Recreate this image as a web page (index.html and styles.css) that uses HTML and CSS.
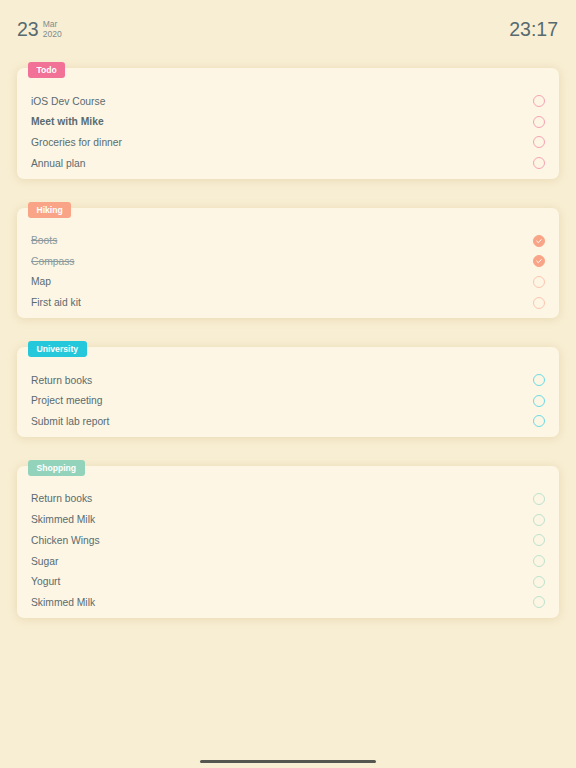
FILE: index.html
```html
<!DOCTYPE html>
<html>
<head>
<meta charset="utf-8">
<link rel="stylesheet" href="styles.css">
</head>
<body>
<div class="screen">
  <header class="topbar">
    <div class="date">
      <span class="day">23</span>
      <span class="monthyear"><span>Mar</span><span>2020</span></span>
    </div>
    <div class="time">23:17</div>
  </header>

  <main class="lists">
    <section class="card todo">
      <div class="badge">Todo</div>
      <ul class="items">
        <li class="item"><span>iOS Dev Course</span><i class="check"></i></li>
        <li class="item bold"><span>Meet with Mike</span><i class="check"></i></li>
        <li class="item"><span>Groceries for dinner</span><i class="check"></i></li>
        <li class="item"><span>Annual plan</span><i class="check"></i></li>
      </ul>
    </section>

    <section class="card hiking">
      <div class="badge">Hiking</div>
      <ul class="items">
        <li class="item done"><span>Boots</span><i class="check"><svg viewBox="0 0 12 12"><path d="M3.8 6.2 L5.3 7.6 L8.2 4.6"/></svg></i></li>
        <li class="item done"><span>Compass</span><i class="check"><svg viewBox="0 0 12 12"><path d="M3.8 6.2 L5.3 7.6 L8.2 4.6"/></svg></i></li>
        <li class="item"><span>Map</span><i class="check"></i></li>
        <li class="item"><span>First aid kit</span><i class="check"></i></li>
      </ul>
    </section>

    <section class="card university">
      <div class="badge">University</div>
      <ul class="items">
        <li class="item"><span>Return books</span><i class="check"></i></li>
        <li class="item"><span>Project meeting</span><i class="check"></i></li>
        <li class="item"><span>Submit lab report</span><i class="check"></i></li>
      </ul>
    </section>

    <section class="card shopping">
      <div class="badge">Shopping</div>
      <ul class="items">
        <li class="item"><span>Return books</span><i class="check"></i></li>
        <li class="item"><span>Skimmed Milk</span><i class="check"></i></li>
        <li class="item"><span>Chicken Wings</span><i class="check"></i></li>
        <li class="item"><span>Sugar</span><i class="check"></i></li>
        <li class="item"><span>Yogurt</span><i class="check"></i></li>
        <li class="item"><span>Skimmed Milk</span><i class="check"></i></li>
      </ul>
    </section>
  </main>

  <div class="home-indicator"></div>
</div>
</body>
</html>
```

FILE: styles.css
```css
html, body {
  margin: 0;
  padding: 0;
}
body {
  background: #f8eed3;
  font-family: "Liberation Sans", Arial, sans-serif;
  color: #5a6b70;
}
.screen {
  width: 576px;
  height: 768px;
  position: relative;
  overflow: hidden;
}
.topbar {
  height: 59px;
  display: flex;
  align-items: center;
  justify-content: space-between;
  padding: 0 18px 0 17px;
}
.date {
  display: flex;
  align-items: center;
  gap: 4px;
}
.day {
  font-size: 19.5px;
  line-height: 1;
  color: #566a70;
}
.monthyear {
  display: flex;
  flex-direction: column;
  font-size: 8.5px;
  line-height: 10px;
  color: #7d8c90;
  margin-top: -1px;
}
.time {
  font-size: 19.5px;
  line-height: 1;
  color: #566a70;
}
.lists {
  display: flex;
  flex-direction: column;
  gap: 28.8px;
  padding: 9px 17px 0 17px;
}
.card {
  background: #fdf6e4;
  border-radius: 7px;
  box-shadow: 0 1px 10px rgba(190, 160, 90, 0.28);
  padding-bottom: 5.3px;
}
.badge {
  display: block;
  width: max-content;
  margin: -6px 0 0 11px;
  height: 16px;
  line-height: 16px;
  padding: 0 8.5px;
  border-radius: 3px;
  color: #fff;
  font-size: 8.6px;
  font-weight: bold;
}
.items {
  list-style: none;
  margin: 12.7px 0 0 0;
  padding: 0;
}
.item {
  height: 20.7px;
  display: flex;
  align-items: center;
  justify-content: space-between;
  padding: 0 14px 0 14px;
  font-size: 10.3px;
}
.item.bold {
  font-weight: bold;
}
.item.done span {
  text-decoration: line-through;
  color: #8a9a9d;
}
.check {
  width: 12px;
  height: 12px;
  box-sizing: border-box;
  border-radius: 50%;
  border: 1px solid;
  display: block;
}
.check svg {
  display: block;
  width: 12px;
  height: 12px;
  margin: -1px;
  fill: none;
  stroke: #fff;
  stroke-width: 1;
  stroke-linecap: round;
  stroke-linejoin: round;
}
.todo .badge { background: #f27196; }
.todo .check { border-color: #f5a3b4; }
.hiking .badge { background: #f9a486; }
.hiking .check { border-color: #fbc6b1; }
.hiking .done .check { background: #f9a486; border-color: #f9a486; }
.university .badge { background: #25c8db; }
.university .check { border-color: #6cdbe3; }
.shopping .badge { background: #93d3bb; }
.shopping .check { border-color: #bde2cc; }

.home-indicator {
  position: absolute;
  left: 200px;
  top: 760px;
  width: 176px;
  height: 3px;
  border-radius: 2px;
  background: #555650;
}
```
